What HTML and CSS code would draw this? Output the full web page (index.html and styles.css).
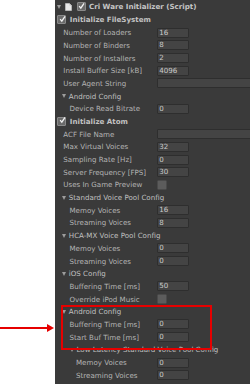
FILE: index.html
```html
<!DOCTYPE html>
<html>
<head>
<meta charset="utf-8">
<link rel="stylesheet" href="styles.css">
</head>
<body>
<div class="page">
  <div class="gutter"></div>
  <div class="panel">
    <div class="header">
      <span class="tri"></span>
      <svg class="doc" width="7" height="8" viewBox="0 0 7 8"><path d="M0.5 0.5 H4.5 L6.5 2.5 V7.5 H0.5 Z" fill="#e8e8e8" stroke="#cfcfcf" stroke-width="0.6"/><path d="M4.5 0.5 V2.5 H6.5" fill="#bdbdbd"/></svg>
      <span class="check"><svg viewBox="0 0 8 8"><path d="M1.3 4.2 L3.2 6.4 L6.9 0.9" fill="none" stroke="#f2f2f2" stroke-width="1.5"/></svg></span>
      <span class="title">Cri Ware Initializer (Script)</span>
    </div>

    <div class="row toggle"><span class="check"><svg viewBox="0 0 8 8"><path d="M1.3 4.2 L3.2 6.4 L6.9 0.9" fill="none" stroke="#f2f2f2" stroke-width="1.5"/></svg></span><span class="strong">Initialize FileSystem</span></div>
    <div class="row"><span class="label i1">Number of Loaders</span><span class="field">16</span></div>
    <div class="row"><span class="label i1">Number of Binders</span><span class="field">8</span></div>
    <div class="row"><span class="label i1">Number of Installers</span><span class="field">2</span></div>
    <div class="row"><span class="label i1">Install Buffer Size [kB]</span><span class="field">4096</span></div>
    <div class="row"><span class="label i1">User Agent String</span><span class="field wide"></span></div>
    <div class="row"><span class="fold i1"><span class="tri"></span>Android Config</span></div>
    <div class="row"><span class="label i2">Device Read Bitrate</span><span class="field">0</span></div>

    <div class="row toggle"><span class="check"><svg viewBox="0 0 8 8"><path d="M1.3 4.2 L3.2 6.4 L6.9 0.9" fill="none" stroke="#f2f2f2" stroke-width="1.5"/></svg></span><span class="strong">Initialize Atom</span></div>
    <div class="row"><span class="label i1">ACF File Name</span><span class="field wide"></span></div>
    <div class="row"><span class="label i1">Max Virtual Voices</span><span class="field">32</span></div>
    <div class="row"><span class="label i1">Sampling Rate [Hz]</span><span class="field">0</span></div>
    <div class="row"><span class="label i1">Server Frequency [FPS]</span><span class="field">30</span></div>
    <div class="row"><span class="label i1">Uses In Game Preview</span><span class="box"></span></div>
    <div class="row"><span class="fold i1"><span class="tri"></span>Standard Voice Pool Config</span></div>
    <div class="row"><span class="label i2">Memoy Voices</span><span class="field">16</span></div>
    <div class="row"><span class="label i2">Streaming Voices</span><span class="field">8</span></div>
    <div class="row"><span class="fold i1"><span class="tri"></span>HCA-MX Voice Pool Config</span></div>
    <div class="row"><span class="label i2">Memoy Voices</span><span class="field">0</span></div>
    <div class="row"><span class="label i2">Streaming Voices</span><span class="field">0</span></div>
    <div class="row"><span class="fold i1"><span class="tri"></span>iOS Config</span></div>
    <div class="row"><span class="label i2">Buffering Time [ms]</span><span class="field">50</span></div>
    <div class="row"><span class="label i2">Override iPod Music</span><span class="box"></span></div>
    <div class="row"><span class="fold i1"><span class="tri"></span>Android Config</span></div>
    <div class="row"><span class="label i2">Buffering Time [ms]</span><span class="field">0</span></div>
    <div class="row"><span class="label i2">Start Buf Time [ms]</span><span class="field">0</span></div>
    <div class="row"><span class="fold i2"><span class="tri"></span>Low Latency Standard Voice Pool Config</span></div>
    <div class="row"><span class="label i3">Memoy Voices</span><span class="field">0</span></div>
    <div class="row"><span class="label i3">Streaming Voices</span><span class="field">0</span></div>
  </div>
</div>
<div class="redbox"></div>
<div class="arrow"><span class="shaft"></span><span class="head"></span></div>
</body>
</html>
```

FILE: styles.css
```css
html, body {
  margin: 0;
  padding: 0;
  background: #ffffff;
}
body {
  width: 250px;
  height: 388px;
  overflow: hidden;
  position: relative;
  font-family: "DejaVu Sans", Verdana, sans-serif;
  font-size: 7.1px;
}
.page {
  display: flex;
  height: 384px;
}
.gutter {
  width: 55px;
  flex: none;
}
.panel {
  flex: 1;
  background: #3a3a3a;
  color: #b4b4b4;
  overflow: hidden;
  white-space: nowrap;
}
.header {
  height: 13.6px;
  display: flex;
  align-items: center;
  padding-left: 2px;
}
.header .tri {
  margin-right: 4px;
}
.doc {
  display: block;
  margin-right: 5px;
}
.header .check {
  margin-right: 3px;
}
.title {
  font-weight: bold;
  color: #c6c6c6;
}
.tri {
  display: inline-block;
  width: 0;
  height: 0;
  border-left: 2.5px solid transparent;
  border-right: 2.5px solid transparent;
  border-top: 4px solid #9c9c9c;
  flex: none;
}
.check {
  width: 7px;
  height: 7px;
  background: #6a6a6a;
  border: 0.5px solid #8a8a8a;
  border-radius: 1px;
  display: flex;
  flex: none;
  position: relative;
}
.check svg {
  width: 8px;
  height: 8px;
  position: relative;
  top: -1.5px;
  left: 0.3px;
}
.row {
  height: 12.7px;
  display: grid;
  grid-template-columns: 101.7px 1fr;
  align-items: center;
}
.row.toggle {
  display: flex;
  padding-left: 2.3px;
  gap: 3.5px;
}
.strong {
  font-weight: bold;
  color: #c2c2c2;
}
.label {
  overflow: hidden;
}
.fold {
  display: flex;
  align-items: center;
  gap: 2.5px;
  color: #c0c0c0;
  grid-column: 1 / span 2;
}
.i1 { padding-left: 8.3px; }
.fold.i1 { padding-left: 7.3px; }
.i2 { padding-left: 14.5px; }
.fold.i2 { padding-left: 15px; }
.i3 { padding-left: 21px; }
.field {
  width: 32.3px;
  height: 10px;
  box-sizing: border-box;
  background: #444444;
  border: 1px solid #2e2e2e;
  border-radius: 1px;
  color: #cbcbcb;
  padding-left: 1.5px;
  line-height: 8px;
}
.field.wide {
  width: auto;
  margin-right: -4px;
}
.box {
  width: 8px;
  height: 7.5px;
  background: #5c5c5c;
  border: 0.5px solid #4a4a4a;
  border-radius: 1.5px;
}
.redbox {
  position: absolute;
  left: 61px;
  top: 305px;
  width: 151px;
  height: 45px;
  box-sizing: border-box;
  border: 2px solid #e60000;
}
.arrow {
  position: absolute;
  left: 0;
  top: 323.5px;
  width: 54px;
  height: 8px;
  display: flex;
  align-items: center;
}
.shaft {
  width: 47px;
  height: 2px;
  background: #e60000;
}
.head {
  width: 0;
  height: 0;
  border-top: 4px solid transparent;
  border-bottom: 4px solid transparent;
  border-left: 7px solid #e60000;
}
```
